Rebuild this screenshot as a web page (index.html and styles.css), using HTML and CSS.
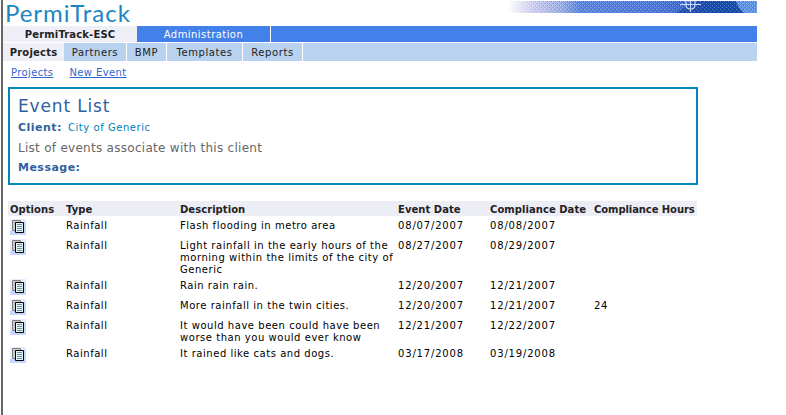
FILE: index.html
```
<!DOCTYPE html>
<html lang="en">
<head>
<meta charset="utf-8">
<title>PermiTrack</title>
<link rel="stylesheet" href="styles.css">
</head>
<body>
<svg width="0" height="0" class="defs">
  <symbol id="copy" viewBox="0 0 16 16">
    <path fill="#e8eeff" d="M0 0h16v16H0z"/>
    <path fill="#c4d8ff" d="M0 12h16v4H0zM14 3h2v10h-2z"/>
    <path fill="#c8c8c8" stroke="#808080" d="M2.500 1.500h8v10h-8z"/>
    <path fill="#e4f2f5" stroke="#000" d="M5.500 3.500h8v10h-8z"/>
    <path stroke="#6c9292" d="M7 5.500h5M7 7.500h5M7 9.500h5M7 11.500h5"/>
  </symbol>
</svg>
<div class="page">
  <header class="top">
    <div class="logo">PermiTrack</div>
    <svg class="banner" width="257" height="12" viewBox="0 0 257 12">
      <defs>
        <linearGradient id="sky"><stop offset=".03" stop-color="#fff"/><stop offset=".13" stop-color="#d0d0f2"/><stop offset=".24" stop-color="#9cb0e8"/><stop offset=".31" stop-color="#5c86de"/><stop offset=".62" stop-color="#4c78dc"/><stop offset=".72" stop-color="#3c68cc"/><stop offset=".85" stop-color="#1d50b4"/></linearGradient>
        <linearGradient id="fade"><stop offset=".04" stop-color="#000"/><stop offset=".2" stop-color="#fff"/></linearGradient>
        <mask id="soft"><path fill="url(#fade)" d="M0 0h257v12H0z"/></mask>
        <pattern id="grain" width="4" height="4" patternUnits="userSpaceOnUse"><path fill="#fff" d="M0 0h1v1H0zM2 2h1v1H2z"/><path fill="#0040a0" d="M1 2h1v1H1zM3 0h1v1H3z"/></pattern>
      </defs>
      <path fill="url(#sky)" d="M0 0h257v12H0z"/>
      <path fill="#1448a8" opacity=".75" d="M176 12l8-5 10-7h40l12 12z"/>
      <path fill="#6094e4" d="M236 0h21v12h-13q-6-5-8-12z"/>
      <path fill="url(#grain)" mask="url(#soft)" opacity=".3" d="M0 0h257v12H0z"/>
      <path fill="none" stroke="#c8dcff" stroke-width="1.200" d="M180 3.500h21M190.500 0v11M186 0v4q0 4 4.500 4t4.500-4V0"/>
    </svg>
  </header>
  <nav class="main"><a class="on">PermiTrack-ESC</a><a>Administration</a></nav>
  <nav class="sub"><a class="on">Projects</a><a class="w2">Partners</a><a class="w3">BMP</a><a class="w4">Templates</a><a class="w5">Reports</a></nav>
  <div class="links"><a>Projects</a><a>New Event</a></div>
  <section class="box">
    <h1>Event List</h1>
    <p class="client"><b>Client:</b><span>City of Generic</span></p>
    <p class="info">List of events associate with this client</p>
    <p class="msg"><b>Message:</b></p>
  </section>
  <div class="grid">
    <div class="row head"><span>Options</span><span>Type</span><span>Description</span><span>Event Date</span><span>Compliance Date</span><span class="hours">Compliance Hours</span></div>
    <div class="row"><svg><use href="#copy"/></svg><span>Rainfall</span><span>Flash flooding in metro area</span><span class="d">08/07/2007</span><span class="d">08/08/2007</span><span></span></div>
    <div class="row three"><svg><use href="#copy"/></svg><span>Rainfall</span><span>Light rainfall in the early hours of the<br>morning within the limits of the city of<br>Generic</span><span class="d">08/27/2007</span><span class="d">08/29/2007</span><span></span></div>
    <div class="row"><svg><use href="#copy"/></svg><span>Rainfall</span><span>Rain rain rain.</span><span class="d">12/20/2007</span><span class="d">12/21/2007</span><span></span></div>
    <div class="row"><svg><use href="#copy"/></svg><span>Rainfall</span><span>More rainfall in the twin cities.</span><span class="d">12/20/2007</span><span class="d">12/21/2007</span><span>24</span></div>
    <div class="row two"><svg><use href="#copy"/></svg><span>Rainfall</span><span>It would have been could have been<br>worse than you would ever know</span><span class="d">12/21/2007</span><span class="d">12/22/2007</span><span></span></div>
    <div class="row"><svg><use href="#copy"/></svg><span>Rainfall</span><span>It rained like cats and dogs.</span><span class="d">03/17/2008</span><span class="d">03/19/2008</span><span></span></div>
  </div>
</div>
</body>
</html>
```
FILE: styles.css
```
* { box-sizing: border-box; }
body { margin: 0; background: #fff; color: #000; font: 10px/12px "DejaVu Sans", sans-serif; }
h1, p { margin: 0; }
.defs { position: absolute; }
.page { height: 415px; margin-left: 1px; border-left: 2px solid #666; }
.top { width: 754px; height: 26px; display: flex; justify-content: space-between; }
.logo { font: 24px/26px Lato, sans-serif; color: #1c86c4; padding-left: 2px; letter-spacing: .95px; white-space: nowrap; }
.banner { margin-top: 1px; }
.main, .sub { display: flex; width: 754px; }
.main { height: 16px; background: #4280ea; }
.main a { width: 134px; border-right: 1px solid #fff; color: #fff; text-align: center; line-height: 17px; letter-spacing: .45px; }
.main .on, .sub .on { color: #222; font-weight: bold; background: #efeff8; border: 0; }
.main .on { letter-spacing: .15px; }
.sub { height: 18px; margin-top: 1px; background: #b8d2f0; }
.sub a { width: 61px; border-right: 1px solid #fff; color: #222; text-align: center; line-height: 19px; letter-spacing: .6px; }
.sub .on { letter-spacing: .2px; }
.sub .w2 { width: 63px; }
.sub .w3 { width: 40px; }
.sub .w4 { width: 76px; }
.sub .w5 { width: 60px; }
.links { display: flex; gap: 16px; padding: 6px 0 0 8px; height: 26px; color: #3366cc; letter-spacing: .38px; }
.links a { text-decoration: underline; }
.box { width: 690px; height: 98px; margin-left: 5px; border: 2px solid #0088b8; padding: 7px 8px; }
.box h1 { font-size: 17px; line-height: 20px; font-weight: normal; color: #3160a0; letter-spacing: .85px; }
.client { display: flex; gap: 6px; line-height: 14px; margin-top: 5px; }
.client span { color: #0080b8; letter-spacing: .55px; }
.box b { font-size: 11px; color: #3160a0; letter-spacing: .48px; }
.info { font-size: 12px; line-height: 16px; margin-top: 5px; color: #666; letter-spacing: .28px; }
.msg { line-height: 14px; margin-top: 5px; }
.grid { margin: 16px 0 0 5px; width: 689px; }
.row { display: grid; grid-template-columns: 56px 114px 218px 92px 104px 1fr; height: 20px; padding-left: 2px; white-space: nowrap; letter-spacing: .54px; }
.row span { padding-top: 4px; }
.row .d { letter-spacing: .83px; }
.head { height: 15px; font-weight: bold; color: #222; letter-spacing: .05px; background: #ededf5; }
.head span { padding-top: 3px; }
.head .hours { letter-spacing: -.08px; }
.row svg { width: 16px; height: 16px; margin-top: 3px; }
.three { height: 40px; }
.two { height: 28px; }
```
